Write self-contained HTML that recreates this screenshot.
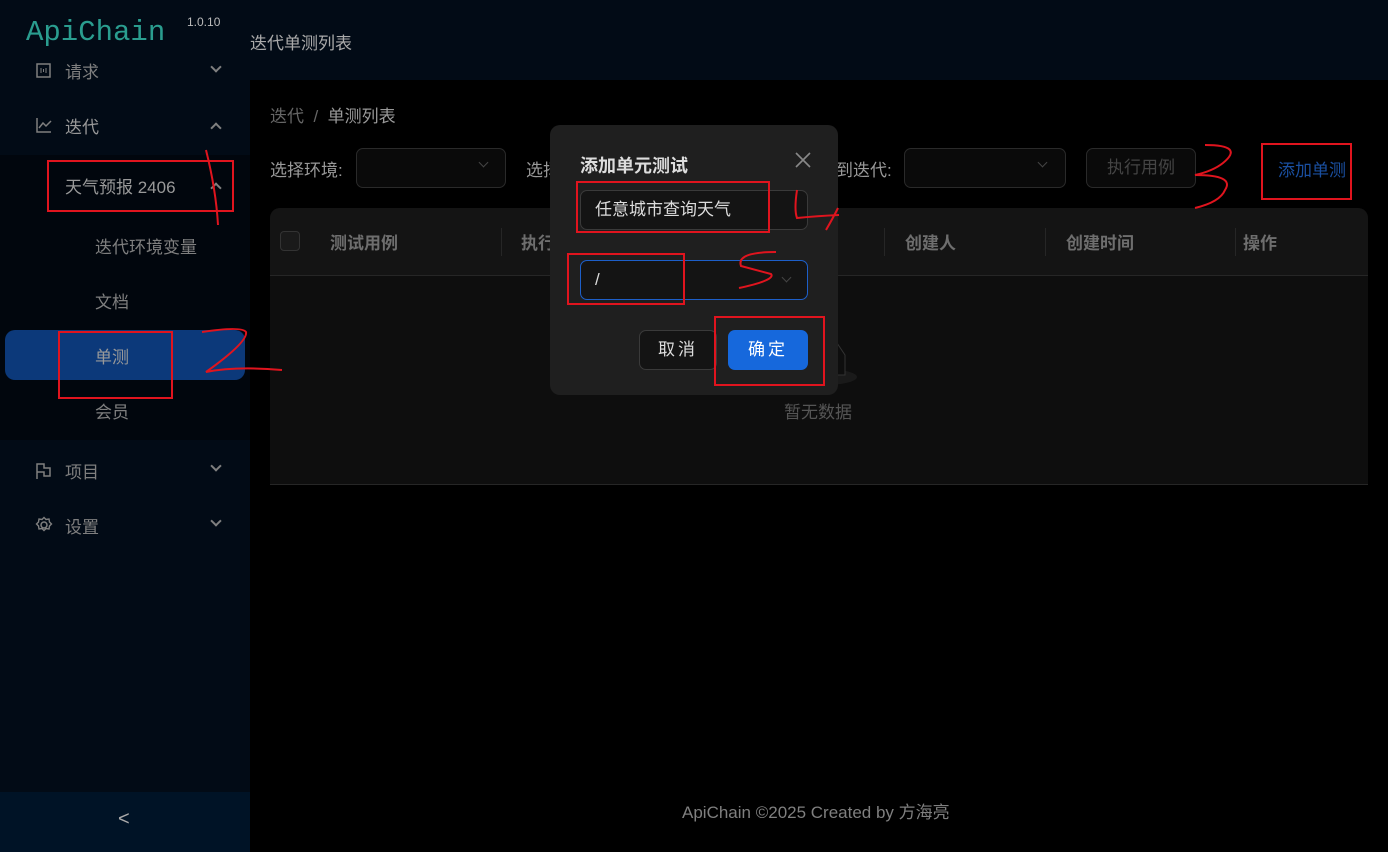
<!DOCTYPE html>
<html><head><meta charset="utf-8"><style>
*{box-sizing:border-box;margin:0;padding:0}
body{width:1388px;height:852px;background:#000;font-family:"Liberation Sans","Noto Sans CJK SC",sans-serif;position:relative;overflow:hidden;color:#7f7f7f;font-size:17px}
.abs{position:absolute}
.side{left:0;top:0;width:250px;height:852px;background:#020b16}
.sub{left:0;top:155px;width:250px;height:285px;background:#01060d}
.trig{left:0;top:792px;width:250px;height:60px;background:#001326}
.hdr{left:250px;top:0;width:1138px;height:80px;background:#020b16}
.mi{color:#7f7f7f;font-size:17px}
.chev{width:8px;height:8px;border-right:2px solid #7f7f7f;border-bottom:2px solid #7f7f7f}
.sel{border:1px solid #2a2a2a;border-radius:7px;background:#0a0a0a}
.th{color:#6e6e6e;font-weight:bold;font-size:17px;top:229px}
.sep{width:1px;height:28px;background:#262626;top:228px}
</style></head><body>
<div class="abs side"></div>
<div class="abs sub"></div>
<div class="abs trig"></div>
<div class="abs hdr"></div>
<div class="abs" style="left:26px;top:16px;font-family:'Liberation Mono',monospace;font-size:29px;color:#2a9d8f">ApiChain</div>
<div class="abs" style="left:187px;top:15px;font-size:12px;color:#bbb">1.0.10</div>
<div class="abs" style="left:250px;top:29px;font-size:17px;color:#aaa">迭代单测列表</div>

<svg class="abs" style="left:36px;top:63px" width="16" height="16"><rect x="1" y="1" width="13" height="13" fill="none" stroke="#7f7f7f" stroke-width="1.5"/><path d="M5 5v5M10 5v5M7.5 6v3" stroke="#7f7f7f"/></svg>
<div class="abs mi" style="left:65px;top:58px">请求</div>
<div class="abs chev" style="left:212px;top:63px;transform:rotate(45deg)"></div>
<svg class="abs" style="left:36px;top:117px" width="16" height="16"><path d="M1 1v14h14M3 11l4-5 3 3 5-5" fill="none" stroke="#7f7f7f" stroke-width="1.5"/></svg>
<div class="abs mi" style="left:65px;top:113px;color:#999">迭代</div>
<div class="abs chev" style="left:212px;top:124px;transform:rotate(-135deg)"></div>
<div class="abs mi" style="left:65px;top:173px;color:#999">天气预报 2406</div>
<div class="abs chev" style="left:212px;top:184px;transform:rotate(-135deg)"></div>
<div class="abs mi" style="left:95px;top:233px">迭代环境变量</div>
<div class="abs mi" style="left:95px;top:288px">文档</div>
<div class="abs" style="left:5px;top:330px;width:240px;height:50px;background:#0c397a;border-radius:10px"></div>
<div class="abs mi" style="left:95px;top:343px;color:#999">单测</div>
<div class="abs mi" style="left:95px;top:398px">会员</div>
<svg class="abs" style="left:35px;top:462px" width="18" height="18"><path d="M2 17V2h7v4h6v8H9V10H2" fill="none" stroke="#7f7f7f" stroke-width="1.5"/></svg>
<div class="abs mi" style="left:65px;top:458px">项目</div>
<div class="abs chev" style="left:212px;top:462px;transform:rotate(45deg)"></div>
<svg class="abs" style="left:35px;top:516px" width="18" height="18"><circle cx="9" cy="9" r="3" fill="none" stroke="#7f7f7f" stroke-width="1.5"/><path d="M9 1.5l2 2 3-.5.5 3 2 2-2 2-.5 3-3-.5-2 2-2-2-3 .5-.5-3-2-2 2-2 .5-3 3 .5z" fill="none" stroke="#7f7f7f" stroke-width="1.4"/></svg>
<div class="abs mi" style="left:65px;top:513px">设置</div>
<div class="abs chev" style="left:212px;top:517px;transform:rotate(45deg)"></div>
<div class="abs" style="left:118px;top:808px;color:#aaa;font-size:20px">&lt;</div>

<div class="abs" style="left:270px;top:102px;color:#666">迭代 &nbsp;/&nbsp; <span style="color:#999">单测列表</span></div>
<div class="abs" style="left:270px;top:156px;color:#999">选择环境:</div>
<div class="abs sel" style="left:356px;top:148px;width:150px;height:40px"></div>
<div class="abs chev" style="left:480px;top:159px;width:7px;height:7px;border-color:#444;border-width:1.5px;transform:rotate(45deg)"></div>
<div class="abs" style="left:526px;top:156px;color:#999">选择</div>
<div class="abs" style="left:836px;top:156px;color:#999">到迭代:</div>
<div class="abs sel" style="left:904px;top:148px;width:162px;height:40px"></div>
<div class="abs chev" style="left:1039px;top:159px;width:7px;height:7px;border-color:#444;border-width:1.5px;transform:rotate(45deg)"></div>
<div class="abs sel" style="left:1086px;top:148px;width:110px;height:40px;color:#444;text-align:center;line-height:38px">执行用例</div>
<div class="abs" style="left:1278px;top:156px;color:#1a4fa0">添加单测</div>

<div class="abs" style="left:270px;top:208px;width:1098px;height:277px;background:#0e0e0e;border-radius:10px 10px 0 0;border-bottom:1px solid #262626"></div>
<div class="abs" style="left:270px;top:208px;width:1098px;height:68px;background:#141414;border-radius:10px 10px 0 0;border-bottom:1px solid #262626"></div>
<div class="abs" style="left:280px;top:231px;width:20px;height:20px;border:1px solid #333;border-radius:4px;background:#1a1a1a"></div>
<div class="abs th" style="left:330px">测试用例</div>
<div class="abs sep" style="left:501px"></div>
<div class="abs th" style="left:521px">执行</div>
<div class="abs sep" style="left:884px"></div>
<div class="abs th" style="left:905px">创建人</div>
<div class="abs sep" style="left:1045px"></div>
<div class="abs th" style="left:1066px">创建时间</div>
<div class="abs sep" style="left:1235px"></div>
<div class="abs th" style="left:1243px">操作</div>
<svg class="abs" style="left:790px;top:335px" width="70" height="52"><ellipse cx="35" cy="42" rx="32" ry="8" fill="#1a1a1a"/><path d="M15 20l8-12h24l8 12v20H15z" fill="#0e0e0e" stroke="#333"/></svg>
<div class="abs" style="left:784px;top:398px;color:#555">暂无数据</div>

<div class="abs" style="left:682px;top:798px;color:#7f7f7f">ApiChain ©2025 Created by 方海亮</div>

<div class="abs" style="left:550px;top:125px;width:288px;height:270px;background:#1f1f1f;border-radius:10px"></div>
<div class="abs" style="left:580px;top:152px;color:#ddd;font-weight:bold;font-size:18px">添加单元测试</div>
<svg class="abs" style="left:794px;top:151px" width="18" height="18"><path d="M2 2l14 14M16 2L2 16" stroke="#888" stroke-width="1.6"/></svg>
<div class="abs" style="left:580px;top:190px;width:228px;height:40px;border:1px solid #3a3a3a;border-radius:7px;background:#141414;color:#ddd;padding-left:14px;line-height:38px">任意城市查询天气</div>
<div class="abs" style="left:580px;top:260px;width:228px;height:40px;border:1px solid #1d5fc9;border-radius:7px;background:#141414;color:#ddd;padding-left:14px;line-height:38px">/</div>
<div class="abs chev" style="left:783px;top:274px;width:7px;height:7px;border-color:#444;border-width:1.5px;transform:rotate(45deg)"></div>
<div class="abs" style="left:639px;top:330px;width:78px;height:40px;border:1px solid #3a3a3a;border-radius:7px;background:#141414;color:#ddd;text-align:center;line-height:38px;letter-spacing:3px">取消</div>
<div class="abs" style="left:728px;top:330px;width:80px;height:40px;border-radius:7px;background:#1668dc;color:#fff;text-align:center;line-height:40px;letter-spacing:3px">确定</div>

<svg class="abs" style="left:0;top:0" width="1388" height="852" fill="none" stroke="#e0141e" stroke-width="2">
<rect x="48" y="161" width="185" height="50"/>
<rect x="59" y="332" width="113" height="66"/>
<rect x="1262" y="144" width="89" height="55"/>
<rect x="577" y="182" width="192" height="50"/>
<rect x="568" y="254" width="116" height="50"/>
<rect x="715" y="317" width="109" height="68"/>
<path d="M206 150q10 40 12 75"/>
<path d="M202 332q40-6 44 0q2 10-40 40q30-6 76-2"/>
<path d="M1205 145q40 0 18 18q-10 8-28 12q40 0 30 15q-5 12-30 18"/>
<path d="M797 190q-3 20 0 28q20-2 42-3M838 208q-5 10-12 22"/>
<path d="M776 252q-40 0-35 14q15 4 30 8q5 6-32 14"/>
</svg>
</body></html>
